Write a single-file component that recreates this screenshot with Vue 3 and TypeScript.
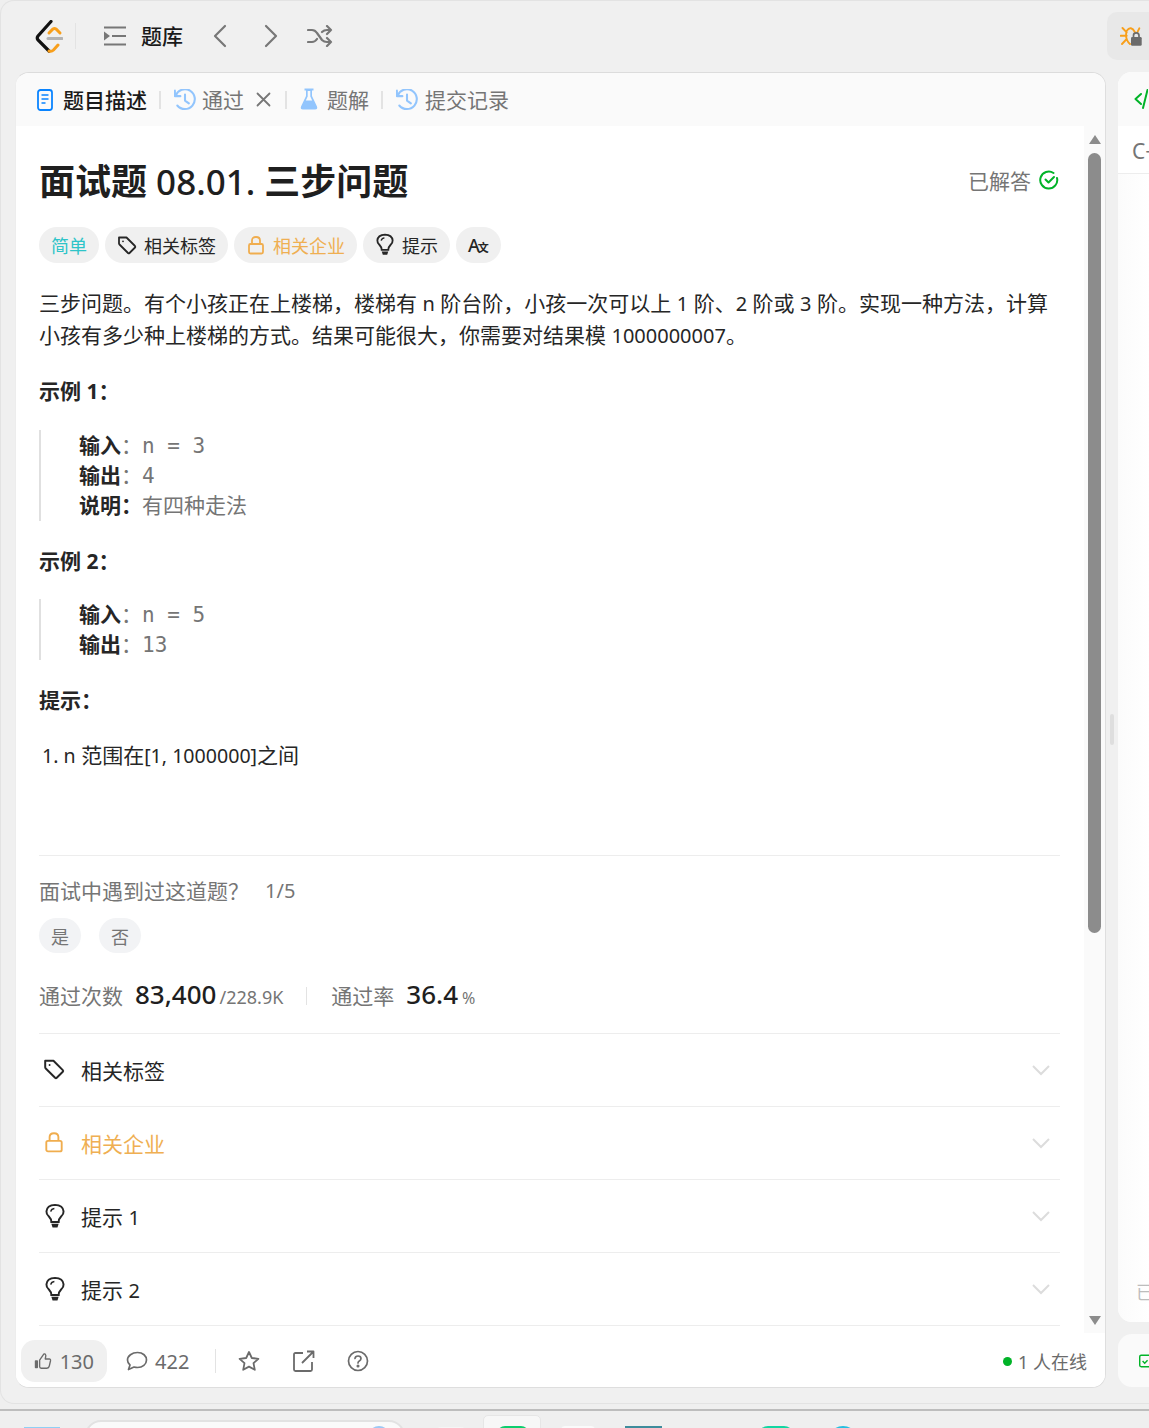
<script setup lang="ts">
const rows = [
  { label: '相关标签', num: '', icon: 'tag', gold: false },
  { label: '相关企业', num: '', icon: 'lock', gold: true },
  { label: '提示 ', num: '1', icon: 'bulb', gold: false },
  { label: '提示 ', num: '2', icon: 'bulb', gold: false },
]
</script>

<template>
  <div class="page">
    <div class="window">
      <header class="topbar">
        <svg class="logo" width="28" height="33" viewBox="0 0 28 33" fill="none">
          <path d="M16 1.5 L3 16 Q1.5 18 3 20 L14 31" stroke="#111" stroke-width="3.2" stroke-linecap="round" />
          <path d="M14 13 L18 9 Q19.5 8 21 9 L25 13" stroke="#f89f1b" stroke-width="3" stroke-linecap="round" />
          <path d="M14 31 Q16.5 32 18.5 30 L23 25" stroke="#f89f1b" stroke-width="3" stroke-linecap="round" />
          <path d="M13 18.5 H27" stroke="#b3b3b3" stroke-width="3" stroke-linecap="round" />
        </svg>
        <i class="vline logo-line"></i>
        <svg class="list-icon" width="22" height="20" viewBox="0 0 22 20" fill="none" stroke="#777" stroke-width="2">
          <path d="M0 1.5 H22 M8 10 H22 M0 18.5 H22" />
          <path d="M0 5.5 L6 10 L0 14.5 Z" fill="#777" stroke="none" />
        </svg>
        <span class="lib">题库</span>
        <svg class="chev-l" width="14" height="24" viewBox="0 0 14 24" fill="none" stroke="#777" stroke-width="2.2" stroke-linecap="round" stroke-linejoin="round"><path d="M12 2 L2 12 L12 22" /></svg>
        <svg class="chev-r" width="14" height="24" viewBox="0 0 14 24" fill="none" stroke="#777" stroke-width="2.2" stroke-linecap="round" stroke-linejoin="round"><path d="M2 2 L12 12 L2 22" /></svg>
        <svg class="shuffle" width="26" height="22" viewBox="0 0 26 22" fill="none" stroke="#777" stroke-width="2.2" stroke-linecap="round" stroke-linejoin="round">
          <path d="M1 5 H5 Q8 5 10 8 L15 15 Q17 17 20 17 H24 M1 17 H5 Q8 17 10 14 M15 7 Q17 5 20 5 H24 M20 1 L24 5 L20 9 M20 13 L24 17 L20 21" />
        </svg>
        <div class="debug">
          <svg width="24" height="24" viewBox="0 0 24 24" fill="none">
            <path d="M2.5 3 L6.7 7.3 M0.7 10.7 H6.7 M2 19 L6.7 14 M6.7 5.7 Q4.5 14 10 19 M6.7 5.7 Q11 0 15 7.3 M19.3 3.3 L17.3 7.3" stroke="#f89f1b" stroke-width="1.9" stroke-linecap="round" />
            <path d="M13.5 13 V10.5 Q13.5 7.8 16.3 7.8 Q19 7.8 19 10.5 V13" stroke="#6b6b6b" stroke-width="1.7" />
            <rect x="11" y="12" width="10.7" height="8.7" rx="1.2" fill="#6b6b6b" />
          </svg>
        </div>
      </header>

      <main class="workspace">
        <section class="left">
          <nav class="tabs">
            <svg class="doc" width="16" height="22" viewBox="0 0 16 22" fill="none" stroke="#0a84ff" stroke-width="1.8">
              <rect x="1" y="1" width="14" height="20" rx="2.5" />
              <path d="M4.5 6 H11.5 M4.5 10 H11.5 M4.5 14 H8.5" stroke-width="1.6" />
            </svg>
            <span class="tab active">题目描述</span>
            <i class="vline tab-line"></i>
            <svg class="hist first" width="22" height="22" viewBox="1 1 20 20" fill="none" stroke="#92c5fd" stroke-width="1.9" stroke-linecap="round" stroke-linejoin="round">
              <path d="M2.5 7 A9 9 0 1 1 4 16 M1.8 2.5 V7.5 H6.8 M11 6 V11.5 L14.5 14" />
            </svg>
            <span class="tab tg">通过</span>
            <svg class="close" width="15" height="15" viewBox="0 0 15 15" stroke="#777" stroke-width="1.8" stroke-linecap="round"><path d="M1.5 1.5 L13.5 13.5 M13.5 1.5 L1.5 13.5" /></svg>
            <i class="vline tab-line2"></i>
            <svg class="flask" width="18" height="23" viewBox="0 0 18 22">
              <path d="M6 1 H12 V7.5 L17 18 Q18 21 15 21 H3 Q0 21 1 18 L6 7.5 Z M7.7 2.6 V8 L5.8 12 H12.2 L10.3 8 V2.6 Z" fill="#92c5fd" fill-rule="evenodd" />
              <path d="M4.5 1 H13.5" stroke="#92c5fd" stroke-width="1.8" />
            </svg>
            <span class="tab tg">题解</span>
            <i class="vline tab-line3"></i>
            <svg class="hist" width="22" height="22" viewBox="1 1 20 20" fill="none" stroke="#92c5fd" stroke-width="1.9" stroke-linecap="round" stroke-linejoin="round">
              <path d="M2.5 7 A9 9 0 1 1 4 16 M1.8 2.5 V7.5 H6.8 M11 6 V11.5 L14.5 14" />
            </svg>
            <span class="tab tg">提交记录</span>
          </nav>

          <div class="scroll-area">
            <div class="content">
              <div class="title-row">
                <h1>面试题<span class="t-num"> 08.01. </span>三步问题</h1>
                <span class="solved">已解答
                  <svg width="20" height="20" viewBox="0 0 20 20" fill="none" stroke="#01b328" stroke-width="2" stroke-linecap="round" stroke-linejoin="round">
                    <path d="M18 8 A8.5 8.5 0 1 1 14.5 3" /><path d="M6.5 9.5 L9.5 12.5 L15 7" />
                  </svg>
                </span>
              </div>

              <div class="pills">
                <span class="pill easy">简单</span>
                <span class="pill">
                  <svg width="20" height="20" viewBox="0 0 20 20" fill="none" stroke="#262626" stroke-width="1.8" stroke-linejoin="round"><path d="M2 2.5 H9.5 L18 11 Q18.7 11.8 18 12.5 L12.5 18 Q11.8 18.7 11 18 L2.5 9.5 Q2 9 2 8.5 Z" /><circle cx="6" cy="6.3" r="0.9" fill="#262626" stroke="none" /></svg>
                  相关标签
                </span>
                <span class="pill gold">
                  <svg width="20" height="20" viewBox="0 0 18 20" fill="none" stroke="#f0ad4e" stroke-width="1.8"><path d="M5 9 V5.5 Q5 2 9 2 Q13 2 13 5.5 V9" /><rect x="2" y="9" width="14" height="9.5" rx="1.5" /></svg>
                  相关企业
                </span>
                <span class="pill">
                  <svg width="20" height="24" viewBox="0 0 18 22" fill="none" stroke="#262626" stroke-width="1.7"><path d="M6 15.5 Q6 13 4 11 Q1.8 9 2 6.8 Q2.4 1.8 9 1.5 Q15.6 1.8 16 6.8 Q16.2 9 14 11 Q12 13 12 15.5 Z" /><path d="M6 17 H12 L11 20 H7 Z" fill="#262626" stroke="none" /><path d="M5.5 7 Q6 4.8 8.5 4.5" stroke-width="1.3" /></svg>
                  提示
                </span>
                <span class="pill trans">A<span class="trans-small">文</span></span>
              </div>

              <p class="para">三步问题。有个小孩正在上楼梯，楼梯有 <span class="lat">n</span> 阶台阶，小孩一次可以上 <span class="lat">1</span> 阶、<span class="lat">2</span> 阶或 <span class="lat">3</span> 阶。实现一种方法，计算<br />小孩有多少种上楼梯的方式。结果可能很大，你需要对结果模 <span class="lat">1000000007</span>。</p>

              <h3 class="ex1">示例 1：</h3>
              <div class="quote">
                <div><b>输入</b><span class="colon">：</span><span class="mono">n  =  3</span></div>
                <div><b>输出</b><span class="colon">：</span><span class="mono">4</span></div>
                <div><b>说明：</b><span class="expl">有四种走法</span></div>
              </div>

              <h3 class="ex2">示例 2：</h3>
              <div class="quote q2">
                <div><b>输入</b><span class="colon">：</span><span class="mono">n  =  5</span></div>
                <div><b>输出</b><span class="colon">：</span><span class="mono">13</span></div>
              </div>

              <h3 class="ex3">提示：</h3>
              <p class="hint"><span class="lat">1. n</span> 范围在<span class="lat">[1, 1000000]</span>之间</p>

              <hr class="rule" />

              <div class="ask"><span>面试中遇到过这道题？</span><span class="ask-n">1/5</span></div>
              <div class="yesno"><span>是</span><span>否</span></div>

              <div class="stats">
                <span class="s-label">通过次数</span>
                <span class="s-num">83,400</span>
                <span class="s-sub">/228.9K</span>
                <i class="vline s-line"></i>
                <span class="s-label">通过率</span>
                <span class="s-num rate">36.4</span>
                <span class="s-pct">%</span>
              </div>

              <div class="acc">
                <div v-for="(r, i) in rows" :key="i" class="acc-row" :class="{ gold: r.gold }">
                  <span class="acc-icon">
                    <svg v-if="r.icon === 'tag'" width="22" height="22" viewBox="0 0 20 20" fill="none" stroke="#262626" stroke-width="1.8" stroke-linejoin="round"><path d="M2 2.5 H9.5 L18 11 Q18.7 11.8 18 12.5 L12.5 18 Q11.8 18.7 11 18 L2.5 9.5 Q2 9 2 8.5 Z" /><circle cx="6" cy="6.3" r="0.9" fill="#262626" stroke="none" /></svg>
                    <svg v-else-if="r.icon === 'lock'" width="22" height="22" viewBox="0 0 18 20" fill="none" stroke="#f0ad4e" stroke-width="1.7"><path d="M5 9 V5.5 Q5 2 9 2 Q13 2 13 5.5 V9" /><rect x="2" y="9" width="14" height="9.5" rx="1.5" /></svg>
                    <svg v-else class="acc-bulb" width="22" height="27" viewBox="0 0 18 22" fill="none" stroke="#262626" stroke-width="1.6"><path d="M6 15.5 Q6 13 4 11 Q1.8 9 2 6.8 Q2.4 1.8 9 1.5 Q15.6 1.8 16 6.8 Q16.2 9 14 11 Q12 13 12 15.5 Z" /><path d="M6 17 H12 L11 20 H7 Z" fill="#262626" stroke="none" /><path d="M5.5 7 Q6 4.8 8.5 4.5" stroke-width="1.2" /></svg>
                  </span>
                  <span class="acc-label">{{ r.label }}<span class="lat">{{ r.num }}</span></span>
                  <svg class="acc-chev" width="20" height="12" viewBox="0 0 20 12" fill="none" stroke="#dcdcdc" stroke-width="2"><path d="M2 2 L10 10 L18 2" /></svg>
                </div>
              </div>
            </div>

            <div class="scrollbar">
              <span class="arrow up"></span>
              <span class="thumb"></span>
              <span class="arrow down"></span>
            </div>
          </div>

          <footer class="foot">
            <span class="like">
              <svg width="22" height="22" viewBox="0 0 22 22" fill="none" stroke="#6b6b6b" stroke-width="1.7" stroke-linejoin="round"><rect x="1" y="10" width="4" height="10" rx="1" fill="#6b6b6b" stroke="none" /><path d="M7 10 L11.5 3.5 Q12.5 1.5 14 2.5 Q15.2 3.5 14.5 6 L14 8.5 H19 Q21 8.5 20.5 11 L19 17.5 Q18.5 20 16 20 H9 Q7 20 7 18 Z" /></svg>
              <span>130</span>
            </span>
            <span class="comment">
              <svg width="22" height="22" viewBox="0 0 22 22" fill="none" stroke="#6b6b6b" stroke-width="1.7" stroke-linejoin="round"><path d="M11.5 2.5 C17 2.5 20.5 6 20.5 10 C20.5 14.5 16.5 17.5 11.5 17.5 Q10 17.5 8 17 L2.5 19.5 L4 15 Q1.5 13 1.5 10 C1.5 6 6 2.5 11.5 2.5 Z" /></svg>
              <span>422</span>
            </span>
            <i class="vline f-line"></i>
            <svg class="star" width="22" height="22" viewBox="0 0 22 22" fill="none" stroke="#6b6b6b" stroke-width="1.8" stroke-linejoin="round"><path d="M11 2 L13.8 8 L20.4 8.8 L15.5 13.2 L16.8 19.8 L11 16.6 L5.2 19.8 L6.5 13.2 L1.6 8.8 L8.2 8 Z" /></svg>
            <svg class="share" width="22" height="22" viewBox="0 0 22 22" fill="none" stroke="#6b6b6b" stroke-width="1.8" stroke-linejoin="round"><path d="M10 3 H2.5 Q1 3 1 4.5 V19.5 Q1 21 2.5 21 H17.5 Q19 21 19 19.5 V12 M9 13 L20 2 M14 1.5 H20.5 V8" /></svg>
            <svg class="help" width="22" height="22" viewBox="0 0 22 22" fill="none" stroke="#6b6b6b" stroke-width="1.7" stroke-linecap="round"><circle cx="11" cy="11" r="9.5" /><path d="M8 8.5 Q8.3 6 11 6 Q14 6 14 8.5 Q14 10 12.3 11 Q11 11.8 11 13" /><circle cx="11" cy="16" r="0.7" fill="#6b6b6b" /></svg>
            <span class="online"><i class="dot"></i>1 人在线</span>
          </footer>
        </section>

        <i class="resizer"></i>

        <section class="right">
          <div class="r-top">
            <div class="r-head">
              <svg width="14" height="20" viewBox="0 0 14 20" fill="none" stroke="#01b328" stroke-width="2" stroke-linecap="round" stroke-linejoin="round"><path d="M7 5 L1.5 10 L7 15 M13.5 1 L9 19" /></svg>
            </div>
            <div class="r-lang">C++</div>
            <div class="r-fill"><span class="r-saved">已</span></div>
          </div>
          <div class="r-bottom">
            <svg width="14" height="18" viewBox="0 0 14 18" fill="none" stroke="#01b328" stroke-width="2"><rect x="1" y="1" width="16" height="16" rx="2" /><path d="M5 9 L8 12 L12 8" /></svg>
          </div>
        </section>
      </main>
    </div>

    <div class="taskbar">
      <span class="tb-win"></span>
      <span class="tb-search"><i class="tb-blue"></i></span>
      <span class="tb-faint"></span>
      <span class="tb-active"><i class="tb-green"></i></span>
      <span class="tb-white"></span>
      <span class="tb-teal"></span>
      <span class="tb-mint"></span>
      <span class="tb-cyan"></span>
    </div>
  </div>
</template>

<style>
html, body { margin: 0; background: #efefef; }
</style>

<style scoped>
.page {
  width: 1149px;
  height: 1428px;
  overflow: hidden;
  background: #efefef;
  font-family: "Noto Sans", "Noto Sans CJK SC", sans-serif;
  color: #262626;
  display: flex;
  flex-direction: column;
}
.lat { font-size: 20px; line-height: 1; }
.window {
  height: 1404px;
  box-sizing: border-box;
  border: 1px solid #e3e3e3;
  border-radius: 14px 0 0 14px;
  border-right: 0;
  flex: none;
  display: flex;
  flex-direction: column;
  background: #f0f0f0;
}
.vline { display: block; width: 2px; background: #e3e3e3; flex: none; }
.topbar {
  height: 71px;
  box-sizing: border-box;
  padding: 0 0 1px 34px;
  flex: none;
  display: flex;
  align-items: center;
}
.logo-line { height: 26px; width: 1px; margin-left: 12px; }
.list-icon { margin-left: 28px; }
.lib { margin-left: 15px; font-size: 21px; font-weight: 500; color: #1a1a1a; line-height: 28px; }
.chev-l { margin-left: 30px; }
.chev-r { margin-left: 37px; }
.shuffle { margin-left: 29px; }
.debug {
  margin-left: auto;
  width: 42px;
  height: 48px;
  background: #e8e8e8;
  border-radius: 10px 0 0 10px;
  display: flex;
  align-items: center;
  padding: 2px 0 0 13px;
  box-sizing: border-box;
}
.workspace { display: flex; height: 1316px; padding-left: 14px; gap: 12px; flex: none; position: relative; }
.resizer {
  position: absolute;
  left: 1109px;
  top: 642px;
  width: 4px;
  height: 31px;
  background: #dedede;
  border-radius: 2px;
}
.left {
  width: 1091px;
  height: 1316px;
  flex: none;
  box-sizing: border-box;
  background: #fff;
  border: 1px solid #dedede;
  border-top-color: #dcdcdc;
  border-left-color: #ededed;
  border-radius: 14px;
  display: flex;
  flex-direction: column;
  overflow: hidden;
}
.tabs {
  height: 53px;
  flex: none;
  background: #fafafa;
  display: flex;
  align-items: center;
  padding-left: 21px;
  font-size: 21px;
}
.doc { margin-right: 10px; }
.tab { line-height: 30px; }
.tab.active { color: #1a1a1a; font-weight: 500; }
.tg { color: #757575; }
.tab-line { width: 2px; height: 18px; margin: 0 12px; }
.tab-line2 { height: 18px; margin: 0 13px 0 14px; }
.tab-line3 { height: 18px; margin: 0 13px 0 12px; }
.hist { margin-right: 7px; }
.hist.first { margin-left: 1px; margin-right: 6px; }
.close { margin-left: 12px; }
.flask { margin-right: 9px; }
.scroll-area { flex: 1; position: relative; min-height: 0; overflow: hidden; }
.content { padding: 0 45px 0 23px; }
.title-row { display: flex; align-items: center; justify-content: space-between; height: 101px; box-sizing: border-box; padding-top: 10px; }
h1 { margin: 0; font-size: 36px; font-weight: 700; line-height: 50px; color: #1f1f1f; white-space: pre; }
.t-num { font-weight: 500; font-size: 35px; }
.solved { font-size: 21px; color: #757575; display: flex; align-items: center; gap: 8px; margin-top: -4px; padding-right: 1px; }
.pills { display: flex; gap: 6px; height: 36px; }
.pill {
  display: inline-flex;
  align-items: center;
  gap: 7px;
  height: 36px;
  padding: 0 12px;
  background: #f0f0f0;
  border-radius: 18px;
  font-size: 18px;
  color: #262626;
  white-space: nowrap;
}
.pill.easy { color: #2ec4c8; }
.pill.gold { color: #efaf52; }
.pill.trans { font-size: 18px; font-weight: 500; gap: 0; }
.trans-small { font-size: 11px; font-weight: 700; margin-left: -2px; margin-top: 4px; }
.para { margin: 24px 0 0; font-size: 21px; line-height: 32px; color: #262626; }
h3 { margin: 0; font-size: 21px; font-weight: 700; line-height: 32px; color: #262626; }
.ex1 { margin-top: 24px; }
.quote {
  margin-top: 24px;
  border-left: 2px solid #e0e0e0;
  padding: 0 0 1px 38px;
  font-size: 21px;
  line-height: 30px;
}
.quote.q2 { margin-top: 23px; }
.quote div { height: 30px; }
.quote div:first-child { margin-top: -1px; }
.quote b { font-weight: 700; color: #262626; }
.colon { color: #757575; }
.mono { white-space: pre; font-family: "DejaVu Sans Mono", "Noto Sans", monospace; font-size: 21px; color: #757575; line-height: 30px; }
.expl { color: #757575; }
.ex2 { margin-top: 24px; }
.ex3 { margin-top: 24px; }
.hint { margin: 23px 0 0 3px; font-size: 21px; line-height: 32px; }
.hint .lat { font-size: 19.6px; }
.rule { border: 0; border-top: 1px solid #ededed; margin: 84px 0 0; }
.ask { margin-top: 20px; display: flex; font-size: 21px; color: #757575; line-height: 30px; }
.ask-n { margin-left: 16px; font-size: 20px; }
.yesno { margin-top: 12px; display: flex; gap: 18px; }
.yesno span {
  width: 42px;
  height: 35px;
  border-radius: 18px;
  background: #f2f3f5;
  color: #757575;
  font-size: 18px;
  display: flex;
  align-items: center;
  justify-content: center;
}
.stats { margin-top: 23px; display: flex; align-items: baseline; height: 40px; }
.s-label { font-size: 21px; color: #757575; margin-right: 12px; }
.s-num { font-size: 26px; font-weight: 500; color: #1f1f1f; }
.s-sub { font-size: 18px; color: #757575; margin-left: 3px; }
.s-pct { font-size: 16px; color: #757575; margin-left: 4px; }
.s-line { width: 1px; height: 18px; margin: 0 24px 0 23px; align-self: center; }
.acc { margin-top: 17px; border-top: 1px solid #ededed; }
.acc-row {
  height: 73px;
  box-sizing: border-box;
  border-bottom: 1px solid #ededed;
  display: flex;
  align-items: center;
  font-size: 21px;
}
.acc-row.gold { color: #efaf52; }
.acc-icon { width: 42px; height: 27px; flex: none; display: flex; align-items: center; justify-content: flex-start; padding-left: 4px; box-sizing: border-box; margin-top: -3px; }
.acc-bulb { margin: 4px 0 0 1px; }
.acc-label { line-height: 30px; margin-top: 2px; white-space: pre; }
.acc-chev { margin-left: auto; margin-right: 9px; }
.scrollbar {
  position: absolute;
  top: 0;
  right: 0;
  bottom: 0;
  width: 21px;
  background: #fafafa;
}
.thumb {
  position: absolute;
  left: 4px;
  top: 27px;
  width: 13px;
  height: 780px;
  background: #8c8c8c;
  border-radius: 7px;
}
.arrow { position: absolute; left: 5px; width: 0; height: 0; border-left: 6px solid transparent; border-right: 6px solid transparent; }
.arrow.up { top: 9px; border-bottom: 9px solid #8c8c8c; }
.arrow.down { bottom: 8px; border-top: 9px solid #8c8c8c; }
.foot {
  height: 54px;
  box-sizing: border-box;
  padding: 2px 0 0 5px;
  flex: none;
  display: flex;
  align-items: center;
  background: #fff;
  color: #6b6b6b;
  font-size: 20px;
}
.like, .comment { display: flex; align-items: center; gap: 7px; }
.like { background: #f0f0f0; border-radius: 14px; height: 42px; padding: 0 13px; width: 86px; box-sizing: border-box; gap: 8px; }
.comment { margin-left: 19px; }
.f-line { width: 1px; height: 24px; margin-left: 26px; }
.star { margin-left: 22px; }
.share { margin-left: 33px; }
.help { margin-left: 32px; }
.online { margin-left: auto; margin-right: 18px; font-size: 18px; display: flex; align-items: center; gap: 6px; }
.dot { width: 9px; height: 9px; border-radius: 50%; background: #01b328; display: block; }
.right { flex: 1; display: flex; flex-direction: column; gap: 12px; height: 1315px; min-width: 0; }
.r-top { flex: 1; background: #fff; border-radius: 14px 0 0 14px; display: flex; flex-direction: column; overflow: hidden; }
.r-head { height: 54px; background: #fafafa; display: flex; align-items: center; padding-left: 16px; flex: none; }
.r-lang { height: 48px; box-sizing: border-box; border-bottom: 1px solid #ededed; padding-left: 14px; font-size: 21px; color: #757575; line-height: 50px; flex: none; white-space: nowrap; }
.r-fill { flex: 1; position: relative; background: linear-gradient(90deg, #fbfbfb, #fff); }
.r-saved { position: absolute; left: 18px; bottom: 18px; font-size: 18px; color: #bdbdbd; white-space: nowrap; }
.r-bottom { height: 53px; flex: none; background: #fafafa; border-radius: 14px 0 0 14px; display: flex; align-items: center; padding-left: 21px; overflow: hidden; }
.taskbar {
  flex: 1;
  border-top: 2px solid #bdbdbd;
  margin-top: 5px;
  position: relative;
  background: #efefef;
  overflow: hidden;
}
.tb-win { position: absolute; left: 24px; top: 16px; width: 36px; height: 10px; background: #8fd0f5; }
.tb-search { position: absolute; left: 85px; top: 9px; width: 316px; height: 30px; background: #fafafa; border: 2px solid #e2e2e2; border-radius: 16px; }
.tb-blue { position: absolute; right: 13px; top: 4px; width: 22px; height: 22px; border-radius: 50%; background: #9cc8f5; display: block; }
.tb-faint { position: absolute; left: 437px; top: 16px; width: 28px; height: 12px; border-radius: 4px; background: #f5f5f5; }
.tb-active { position: absolute; left: 483px; top: 4px; width: 58px; height: 40px; background: #f7f7f7; border: 1px solid #e6e6e6; box-sizing: border-box; border-radius: 5px; }
.tb-green { position: absolute; left: 13px; top: 10px; width: 32px; height: 30px; border-radius: 8px; background: #0dce6e; display: block; }
.tb-white { position: absolute; left: 561px; top: 15px; width: 34px; height: 20px; background: #fafafa; border-radius: 4px; }
.tb-teal { position: absolute; left: 625px; top: 15px; width: 37px; height: 20px; background: #3e8c9c; }
.tb-mint { position: absolute; left: 758px; top: 15px; width: 36px; height: 20px; border-radius: 10px; background: #13d6a2; }
.tb-cyan { position: absolute; left: 828px; top: 15px; width: 30px; height: 30px; border-radius: 50%; background: #25bfe0; }
</style>
